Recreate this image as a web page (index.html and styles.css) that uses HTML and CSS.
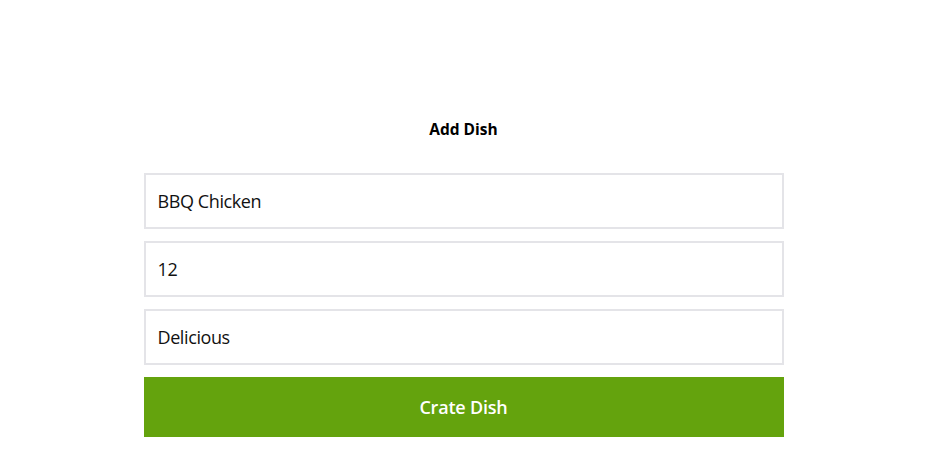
FILE: index.html
```html
<!DOCTYPE html>
<html>
<head>
<meta charset="utf-8">
<link rel="stylesheet" href="styles.css">
</head>
<body>
<main class="page">
  <h1 class="title">Add Dish</h1>
  <form class="form">
    <input class="field" type="text" value="BBQ Chicken">
    <input class="field" type="text" value="12">
    <input class="field" type="text" value="Delicious">
    <button class="submit" type="button">Crate Dish</button>
  </form>
</main>
</body>
</html>
```
FILE: styles.css
```css
html, body {
  margin: 0;
  padding: 0;
  background: #ffffff;
}
.page {
  width: 640px;
  margin: 0 auto;
  padding-top: 118px;
  display: flex;
  flex-direction: column;
  font-family: "Open Sans", sans-serif;
}
.title {
  margin: 0 0 33px;
  text-align: center;
  font-size: 15.5px;
  line-height: 22px;
  font-weight: 700;
  color: #000;
}
.form {
  display: flex;
  flex-direction: column;
  gap: 12px;
}
.field {
  box-sizing: border-box;
  height: 56px;
  width: 100%;
  margin: 0;
  padding: 0 12px;
  border: 2px solid #e4e4e8;
  font-family: "Open Sans", sans-serif;
  font-size: 18px;
  letter-spacing: -0.4px;
  color: #111;
  background: #fff;
  outline: none;
}
.submit {
  height: 60px;
  width: 100%;
  margin: 0;
  border: none;
  background: #64a30d;
  color: #fff;
  font-family: "Open Sans", sans-serif;
  font-size: 18px;
  font-weight: 600;
  letter-spacing: -0.2px;
}
```
